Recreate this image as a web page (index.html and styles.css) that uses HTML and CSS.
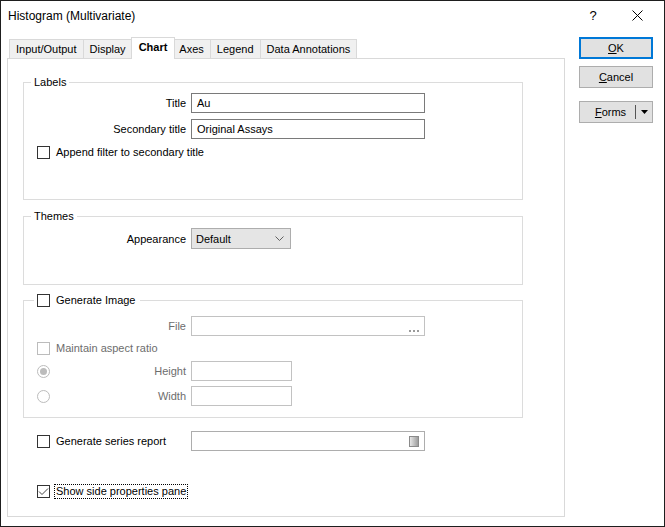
FILE: index.html
```html
<!DOCTYPE html>
<html lang="en">
<head>
    <meta charset="UTF-8">
    <title>Histogram (Multivariate)</title>
    <link rel="stylesheet" href="styles.css">
</head>
<body>
    <div class="dialog">
        <div class="titlebar">
            <span class="title">Histogram (Multivariate)</span>
            <span class="caption-btn">?</span>
            <span class="caption-btn">
                <svg width="11" height="11" viewBox="0 0 11 11"><path d="M0.5 0.5 L10.5 10.5 M10.5 0.5 L0.5 10.5" stroke="#000" stroke-width="1" fill="none"/></svg>
            </span>
        </div>
        <div class="content">
            <div class="main">
                <div class="tabs">
                    <div class="tab">Input/Output</div>
                    <div class="tab">Display</div>
                    <div class="tab active">Chart</div>
                    <div class="tab">Axes</div>
                    <div class="tab">Legend</div>
                    <div class="tab">Data Annotations</div>
                </div>
                <div class="panel">
                    <fieldset class="group group-labels">
                        <legend>Labels</legend>
                        <div class="form-grid">
                            <span class="field-label">Title</span>
                            <div class="textbox wide">Au</div>
                            <span class="field-label">Secondary title</span>
                            <div class="textbox wide">Original Assays</div>
                        </div>
                        <div class="check check-row">
                            <span class="box"></span>
                            <span>Append filter to secondary title</span>
                        </div>
                    </fieldset>

                    <fieldset class="group group-themes">
                        <legend>Themes</legend>
                        <div class="form-grid">
                            <span class="field-label">Appearance</span>
                            <div class="combo">
                                <span>Default</span>
                                <svg width="9" height="5" viewBox="0 0 9 5"><path d="M0.5 0.5 L4.5 4.5 L8.5 0.5" stroke="#606060" fill="none"/></svg>
                            </div>
                        </div>
                    </fieldset>

                    <fieldset class="group group-image">
                        <legend class="check-legend">
                            <span class="check">
                                <span class="box"></span>
                                <span>Generate Image</span>
                            </span>
                        </legend>
                        <div class="form-grid image-grid">
                            <span class="field-label disabled">File</span>
                            <div class="textbox wide off file-box">
                                <svg width="10" height="2" viewBox="0 0 10 2"><rect x="0" y="0" width="2" height="2" fill="#9a9a9a"/><rect x="4" y="0" width="2" height="2" fill="#9a9a9a"/><rect x="8" y="0" width="2" height="2" fill="#9a9a9a"/></svg>
                            </div>
                            <div class="check span-all disabled">
                                <span class="box off"></span>
                                <span>Maintain aspect ratio</span>
                            </div>
                            <div class="radio-label">
                                <span class="radio checked"></span>
                                <span class="disabled">Height</span>
                            </div>
                            <div class="textbox small off"></div>
                            <div class="radio-label">
                                <span class="radio"></span>
                                <span class="disabled">Width</span>
                            </div>
                            <div class="textbox small off"></div>
                        </div>
                    </fieldset>

                    <div class="series-row">
                        <div class="check series-check">
                            <span class="box"></span>
                            <span>Generate series report</span>
                        </div>
                        <div class="textbox wide series-box">
                            <span class="swatch"></span>
                        </div>
                    </div>

                    <div class="check pane-row">
                        <span class="box">
                            <svg width="11" height="11" viewBox="0 0 11 11"><path d="M1 5.5 L4 8.5 L10 2.5" stroke="#444" stroke-width="1" fill="none"/></svg>
                        </span>
                        <span class="focus">Show side properties pane</span>
                    </div>
                </div>
            </div>

            <div class="side">
                <div class="button default"><span><u>O</u>K</span></div>
                <div class="button"><span><u>C</u>ancel</span></div>
                <div class="button split">
                    <span class="split-main"><u>F</u>orms</span>
                    <span class="split-divider"></span>
                    <span class="split-arrow">
                        <svg width="7" height="4" viewBox="0 0 7 4"><path d="M0 0 L7 0 L3.5 4 Z" fill="#000"/></svg>
                    </span>
                </div>
            </div>
        </div>
    </div>
</body>
</html>
```

FILE: styles.css
```css
* {
    box-sizing: border-box;
}

body {
    margin: 0;
    font-family: "Liberation Sans", Arial, sans-serif;
    font-size: 11px;
    color: #000;
    background-color: #fff;
}

.dialog {
    width: 665px;
    height: 527px;
    border: 1px solid #1e1e1e;
    background-color: #fff;
    display: flex;
    flex-direction: column;
}

/* title bar */
.titlebar {
    height: 29px;
    display: flex;
    align-items: center;
    padding: 0 5px 0 7px;
}

.titlebar .title {
    flex: 1;
    font-size: 12px;
}

.caption-btn {
    width: 44px;
    display: flex;
    justify-content: center;
    font-size: 13px;
}

/* body */
.content {
    flex: 1;
    display: flex;
    padding: 0 11px 0 6px;
}

.main {
    width: 558px;
}

.tabs {
    margin-top: 7px;
    height: 21px;
    display: flex;
    align-items: flex-end;
    padding-left: 2px;
}

.tab {
    height: 19px;
    line-height: 18px;
    padding: 0 6px;
    border: 1px solid #d9d9d9;
    border-bottom: none;
    background-color: #f0f0f0;
    margin-left: -1px;
}

.tab:first-child {
    margin-left: 0;
}

.tab.active {
    position: relative;
    z-index: 1;
    height: 22px;
    line-height: 18px;
    margin: 0 -2px -1px -2px;
    padding: 0 7px;
    background-color: #fff;
    font-weight: bold;
}

.panel {
    height: 459px;
    border: 1px solid #d9d9d9;
    padding: 16px 41px 0 15px;
}

/* group boxes */
.group {
    margin: 0;
    padding: 0;
    min-width: 0;
    border: 1px solid #dcdcdc;
}

.group legend {
    margin-left: 7px;
    padding: 0 3px;
    line-height: 15px;
}

.group-labels {
    padding: 3px 0 39px;
}

.group-themes {
    margin-top: 9px;
    padding: 4px 0 35px;
}

.group-image {
    margin-top: 8px;
    padding: 8px 0 11px;
}

.group .check-legend {
    margin-left: 10px;
    padding: 0 4px 0 3px;
}

.form-grid {
    display: grid;
    grid-template-columns: 162px auto;
    column-gap: 5px;
    row-gap: 6px;
    align-items: center;
    justify-items: start;
}

.image-grid {
    row-gap: 5px;
}

.field-label {
    justify-self: end;
}

.disabled {
    color: #6d6d6d;
}

.span-all {
    grid-column: 1 / -1;
    margin-left: 13px;
}

/* controls */
.textbox {
    height: 20px;
    line-height: 18px;
    border: 1px solid #7a7a7a;
    padding: 0 5px;
    background-color: #fff;
}

.textbox.wide {
    width: 234px;
}

.textbox.small {
    width: 101px;
}

.textbox.off {
    border-color: #c2c2c2;
}

.file-box {
    display: flex;
    justify-content: flex-end;
    align-items: flex-end;
    padding: 0 5px 3px;
    border-color: #adadad;
}

.combo {
    width: 100px;
    height: 21px;
    border: 1px solid #adadad;
    background-color: #e5e5e5;
    display: flex;
    align-items: center;
    justify-content: space-between;
    padding: 0 6px 0 4px;
}

.check {
    display: flex;
    align-items: center;
    gap: 6px;
    line-height: 15px;
}

.check-row {
    margin: 6px 0 0 13px;
}

.box {
    width: 13px;
    height: 13px;
    border: 1px solid #333;
    background-color: #fff;
    display: flex;
    align-items: center;
    justify-content: center;
}

.box.off {
    border-color: #bcbcbc;
}

.radio-label {
    justify-self: stretch;
    display: flex;
    align-items: center;
    justify-content: space-between;
    padding-left: 13px;
}

.radio {
    width: 13px;
    height: 13px;
    border: 1px solid #bcbcbc;
    border-radius: 50%;
    display: flex;
    align-items: center;
    justify-content: center;
}

.radio.checked::after {
    content: "";
    width: 7px;
    height: 7px;
    border-radius: 50%;
    background-color: #bcbcbc;
}

.series-row {
    margin-top: 13px;
    display: flex;
    align-items: center;
}

.series-check {
    width: 168px;
    padding-left: 14px;
}

.series-box {
    border-color: #adadad;
    display: flex;
    justify-content: flex-end;
    align-items: center;
    padding: 0 5px;
}

.swatch {
    width: 10px;
    height: 11px;
    border: 1px solid #8a8a8a;
    background: linear-gradient(to right, #e6e6e6, #9c9c9c);
}

.pane-row {
    margin: 33px 0 0 14px;
    gap: 4px;
}

.focus {
    border: 1px dotted #000;
    padding: 0 1px;
    line-height: 13px;
}

/* buttons */
.side {
    margin-left: 14px;
    width: 74px;
    padding-top: 7px;
}

.button {
    height: 22px;
    border: 1px solid #adadad;
    background-color: #e1e1e1;
    display: flex;
    align-items: center;
    justify-content: center;
    margin-bottom: 7px;
}

.button.default {
    border: 2px solid #0078d7;
}

.button.split {
    margin-top: 13px;
    justify-content: flex-start;
}

.split-main {
    flex: 1;
    text-align: center;
    padding-left: 6px;
}

.split-divider {
    width: 1px;
    height: 14px;
    background-color: #555;
}

.split-arrow {
    width: 16px;
    display: flex;
    justify-content: center;
}
```
